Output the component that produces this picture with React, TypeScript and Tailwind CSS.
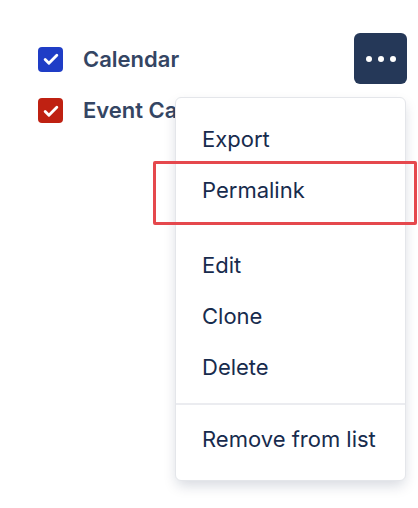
import React from 'react';

const CheckBox = ({ color }: { color: string }) => (
  <span className={`flex h-[25px] w-[25px] items-center justify-center rounded-[4px] ${color}`}>
    <svg viewBox="0 0 24 24" className="h-[20px] w-[20px]" fill="none">
      <path d="M5 12.5l4.5 4.5L19 7.5" stroke="white" strokeWidth="3.4" strokeLinecap="round" strokeLinejoin="round" />
    </svg>
  </span>
);

const MenuItem = ({ label }: { label: string }) => (
  <div className="flex h-[51px] items-center pl-[26px] text-[22px] text-[#172b4d]">{label}</div>
);

const App = () => {
  return (
    <div
      className="relative h-[508px] w-[418px] overflow-hidden bg-white"
      style={{ fontFamily: 'Inter, "Noto Sans", sans-serif' }}
    >
      <div className="flex justify-between pl-[38px] pr-[11px] pt-[33px]">
        <div className="flex flex-col">
          <div className="flex h-[52px] items-center gap-[20px]">
            <CheckBox color="bg-[#1f3dc6]" />
            <span className="text-[22px] font-semibold text-[#344563]">Calendar</span>
          </div>
          <div className="flex h-[51px] items-center gap-[20px]">
            <CheckBox color="bg-[#bf2112]" />
            <span className="text-[22px] font-semibold text-[#344563]">Event Calendar</span>
          </div>
        </div>
        <button className="flex h-[51px] w-[53px] items-center justify-center gap-[6px] rounded-[6px] bg-[#253858]">
          <span className="h-[6px] w-[6px] rounded-full bg-white" />
          <span className="h-[6px] w-[6px] rounded-full bg-white" />
          <span className="h-[6px] w-[6px] rounded-full bg-white" />
        </button>
      </div>

      {/* dropdown menu */}
      <div className="absolute left-[175px] top-[97px] w-[231px] rounded-[6px] border border-[#e4e6ea] bg-white shadow-[0_6px_14px_-2px_rgba(9,30,66,0.18)]">
        <div className="pt-[16px] pb-[24px]">
          <MenuItem label="Export" />
          <MenuItem label="Permalink" />
        </div>
        <div className="pb-[10px]">
          <MenuItem label="Edit" />
          <MenuItem label="Clone" />
          <MenuItem label="Delete" />
        </div>
        <div className="border-t-2 border-[#ebecf0] pt-[9px] pb-[15px]">
          <MenuItem label="Remove from list" />
        </div>
      </div>

      {/* highlight */}
      <div className="absolute left-[153px] top-[161px] h-[64px] w-[264px] rounded-[2px] border-[3px] border-[#e5484d]" />
    </div>
  );
};

export default App;
